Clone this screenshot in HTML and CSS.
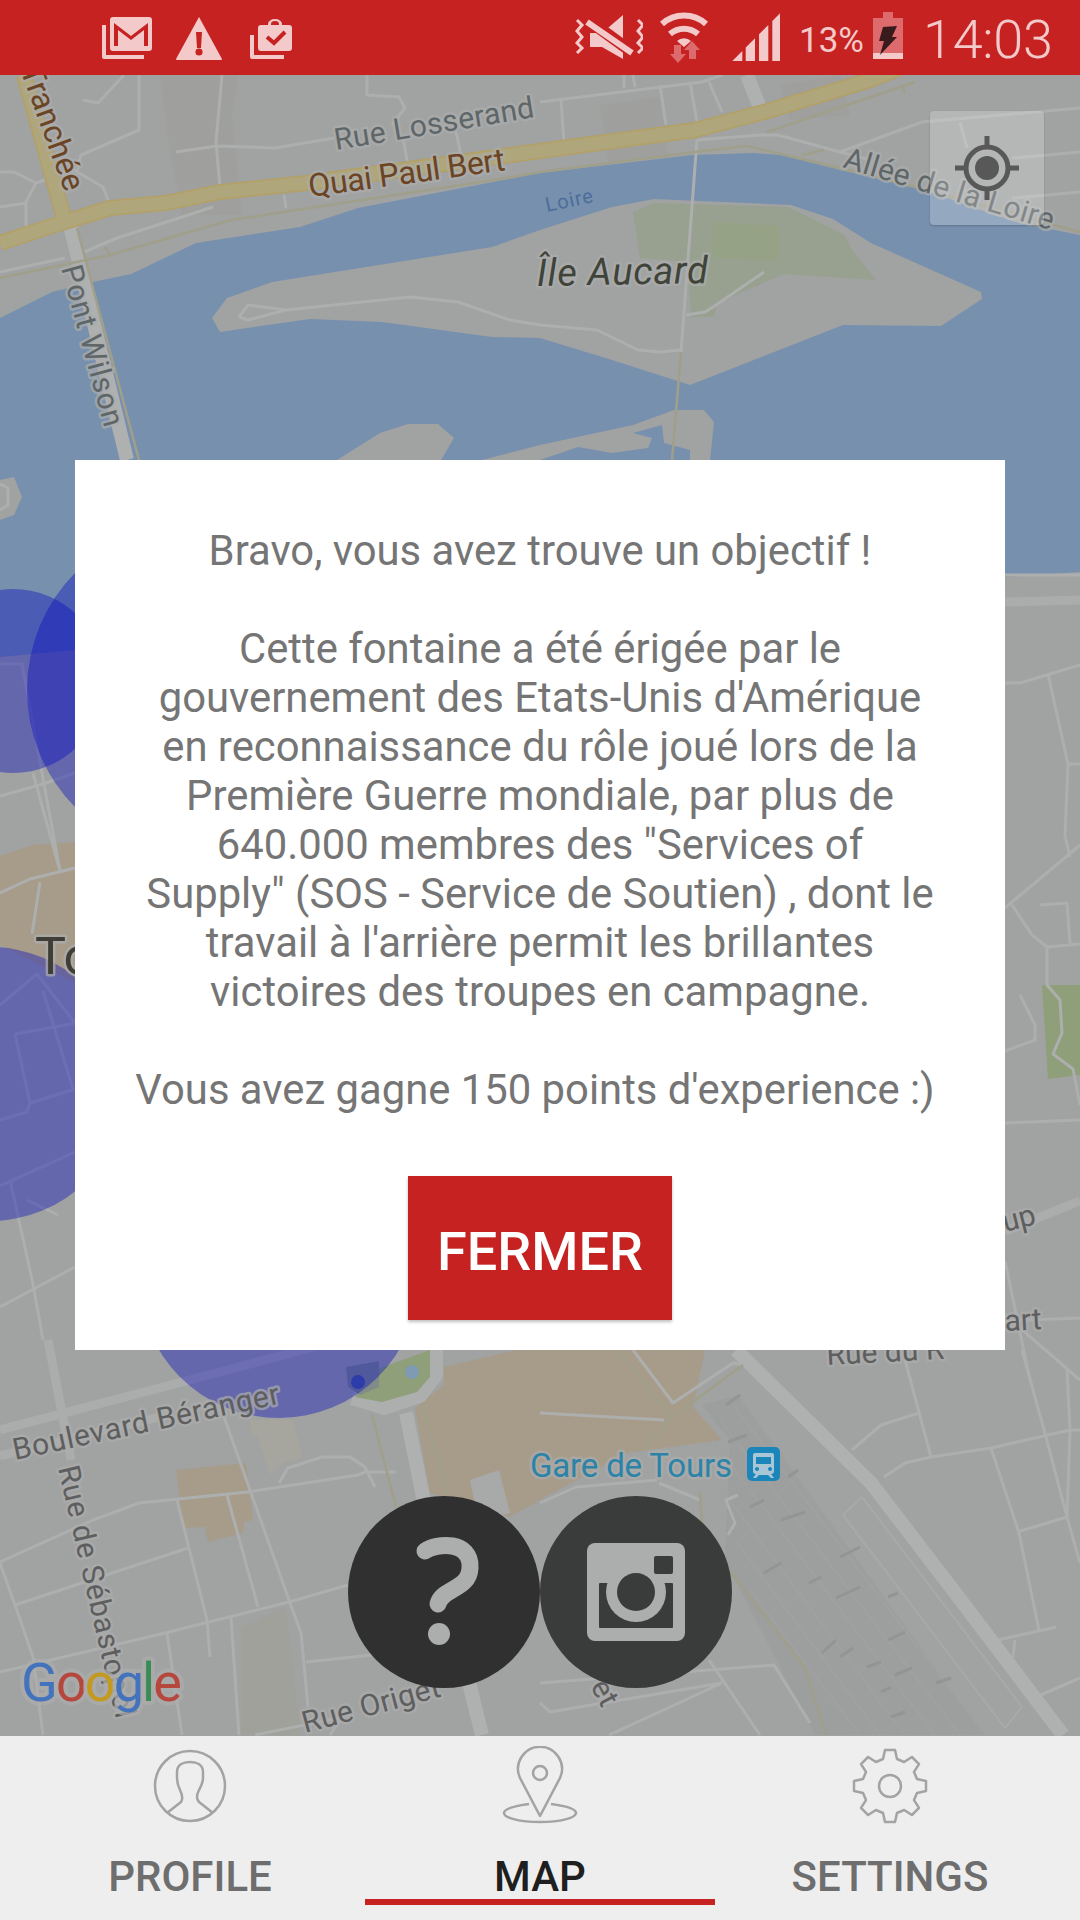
FILE: index.html
```html
<!DOCTYPE html>
<html lang="fr">
<head>
  <meta charset="UTF-8">
  <meta name="viewport" content="width=device-width, initial-scale=1.0">
  <title>Map</title>
  <link rel="stylesheet" href="styles.css">
</head>
<body>
  <div class="statusbar">
    <svg class="st-gmail" width="50" height="45" viewBox="102 16 50 45">
      <path class="pale" d="M113 17h36a3 3 0 0 1 3 3v28a3 3 0 0 1-3 3h-36a3 3 0 0 1-3-3V20a3 3 0 0 1 3-3z"/>
      <path class="cut" d="M114 46V23l17 13 17-13v23h-4V30l-13 10-13-10v16z"/>
      <path class="pale" d="M102 25h4v30h38v4h-40a2 2 0 0 1-2-2z"/>
    </svg>
    <svg class="st-warn" width="46" height="45" viewBox="176 16 46 45">
      <path class="pale" d="M199 17l23 42a1 1 0 0 1-1 1h-44a1 1 0 0 1-1-1z"/>
      <path class="cut" d="M196 32h6l-1 16h-4z"/>
      <circle class="cut" cx="199" cy="52" r="3.6"/>
    </svg>
    <svg class="st-case" width="42" height="45" viewBox="250 16 42 45">
      <path class="pale" d="M261 25h7v-1a7 5 0 0 1 14 0v1h7a3 3 0 0 1 3 3v20a3 3 0 0 1-3 3h-28a3 3 0 0 1-3-3V28a3 3 0 0 1 3-3z"/>
      <path class="cut" d="M271 25v-1a4 3 0 0 1 8 0v1z"/>
      <path class="cut-line" d="M267 37l7 6 11-11"/>
      <path class="pale" d="M250 35h4v20h30v4h-32a2 2 0 0 1-2-2z"/>
    </svg>
    <div class="st-right">
      <svg class="st-mute" width="68" height="46" viewBox="575 14 68 46">
        <path class="pale" d="M590 33h12l21-18v44l-21-12h-12z"/>
        <path class="slash-gap" d="M588 20l44 32"/>
        <path class="slash" d="M587 22l45 31"/>
        <path class="zig" d="M577 20l5 5-5 6 5 6-5 6 5 5-5 5M638 20l5 5-5 6 5 6-5 6 5 5-5 5"/>
      </svg>
      <svg class="st-wifi" width="48" height="54" viewBox="660 9 48 54">
        <path class="wave" d="M662 24a33 33 0 0 1 44 0M670 34a21 21 0 0 1 28 0"/>
        <path class="pale" d="M677 41a10 10 0 0 1 14 0l-7 6z"/>
        <path class="dim" d="M674 45h7v9h5l-8 9-8-9h4zM692 41l8 9h-4v9h-7v-9h-5z"/>
      </svg>
      <svg class="st-signal" width="48" height="48" viewBox="732 13 48 48">
        <path class="pale" d="M732.3 61l10-10v10zM745.7 47.6l9.300-9.300V61h-9.300zM759 34.300l9.300-9.300v36H759zM772.3 21l7.700-7.700V61h-7.700z"/>
      </svg>
      <span class="st-pct">13%</span>
      <svg class="st-batt" width="30" height="48" viewBox="873 12 30 48">
        <path class="dim" d="M883 12h10v6h10v35h-30V18h10z"/>
        <path class="pale" d="M873 53h30v6h-30z"/>
        <path class="bolt" d="M883 27l14-1-5 11h5l-17 18 4-14h-5z"/>
      </svg>
      <span class="st-time">14:03</span>
    </div>
  </div>

  <div class="map">
    <svg class="map-canvas" width="1080" height="1661" viewBox="0 75 1080 1661">
      <rect class="land" x="0" y="75" width="1080" height="1661"/>
      <path class="block" d="M160 75h78l-6 40 10 100-60 0-12-60zM600 105l60-8 8 60-60 5zM780 85l60-10 10 40-60 5z"/>

      <path class="water" d="M0 318L52 292 93 282 131 274 196 243 300 227 358 208 540 173 692 155 753 153 781 155 840 170 919 188 1015 222 1080 235V572L1005 577 75 650 0 657z"/>
      <path class="land" d="M0 480L14 477 22 497 14 515 0 520z"/>
      <path class="road" d="M0 484L8 488 8 505 0 510"/>
      <path class="land" d="M212 318L227 298 272 282 492 247 540 230 612 207 654 199 791 205 833 219 871 243 981 292 982 299 941 326 843 325 690 385 612 360 540 338 492 337 382 322 310 319 220 332z"/>
      <path class="park" d="M633 212L654 203 788 207 845 235 852 250 876 280 784 274 747 290 717 303 714 317 691 317 688 262 640 258z"/>
      <path class="park-dark" d="M714 222L779 226 778 262 712 257z"/>
      <path class="land" d="M337 460L380 433 408 424 438 424 454 438 441 460zM482 460L540 445 633 425 674 410 704 410 714 422 709 470 690 470 690 450 664 443 662 425 633 433 652 438 648 448 612 453 578 447 540 460z"/>

      <path class="tan" d="M0 856L32 845 75 842 90 990 0 945z"/>
      <path class="tan" d="M444 1367L516 1350 705 1350 693 1407 722 1440 626 1453 540 1500 510 1517 430 1493 415 1408 444 1385z"/>
      <path class="pale-block" d="M470 1480L499 1470 510 1513 478 1520z"/>
      <path class="tan" d="M176 1470L246 1463 253 1520 244 1522 243 1533 208 1542 205 1527 183 1528z"/>
      <path class="cream" d="M250 1420L293 1420 303 1457 282 1463 270 1475 258 1438 250 1432z"/>
      <path class="grey-green" d="M241 1627L286 1607 300 1735 241 1735z"/>
      <path class="green" d="M1042 985H1080V1075L1048 1079z"/>
      <path class="yard" d="M702 1405L738 1395 984 1735H815L725 1560 730 1440z"/>
      <path class="track" d="M733 1405L985 1735M720 1420L960 1735M712 1440L935 1735M722 1490L905 1735M735 1540L880 1735M750 1590L860 1735"/>
      <path class="tick" d="M726 1405L740 1395M728 1442L747 1435M781 1520L805 1512M788 1477L798 1470M750 1507L764 1500M840 1557L860 1547M764 1573L781 1563M809 1583L821 1577M836 1598L860 1587M888 1597L898 1593M888 1640L905 1632M822 1653L836 1640M840 1657L853 1648M867 1667L881 1662M895 1675L912 1668M881 1692L891 1687M936 1683L951 1678M891 1717L905 1712"/>

      <!-- small streets -->
      <path class="road" d="M139 75V130L81 155 77 172M83 100L98 103 124 75M0 172H14L36 183 26 202V227M0 207L26 203M36 183L74 170 103 187 110 205M176 152L217 146 275 148 334 138M222 75L216 142 220 187M403 138L408 165M456 132L461 155M367 75L367 95 399 97 405 108 392 125M0 272L65 258M84 252L117 238 213 207M284 195L286 208"/>
      <path class="road" d="M540 102L702 82 722 75M561 100L564 142M660 85L666 125M690 82L697 122M709 82L722 112M624 75V88M633 75L635 87M697 140L760 135 778 135 840 152 922 122 1080 108M840 152L870 160M960 122L967 148M1012 158L1080 152M1012 198L1080 192M764 272L716 305 705 312 686 315M239 317L248 305 286 310 410 297 458 302 510 320 540 325 597 330 638 350 660 352 681 350M239 317L248 320 286 310"/>
      <path class="road" d="M697 140L681 352"/>
      <path class="road" d="M1005 575H1080M1005 683H1020L1080 665M1048 674L1068 764 1065 836 1070 857M1068 764H1080M1005 908L1080 845M1012 905L1032 935 1047 947 1080 944M1040 905L1067 903 1070 944M1047 947L1047 985 1060 1000 1062 1033 1053 1054 1073 1069 1080 1105M1020 995L1035 1025V1040L1005 1051M1005 1123L1080 1120M1005 1261L1030 1380M1005 1321L1080 1318M1005 1315L1080 1380"/>
      <path class="road" d="M0 664H20L22 664 60 871M0 796L43 784 75 773M33 773L60 871M0 893L30 879 75 868M40 882L32 934M0 1005L37 974 75 1023M15 1034L60 1026 75 1023M15 1034L30 1103 75 1089M30 1103L27 1112 0 1120M43 991L73 1089M0 1186L75 1152M10 1180L33 1284 43 1340M0 1307L75 1267M27 1200L58 1215"/>
      <path class="road" d="M0 1562L93 1520 139 1503 248 1492 358 1475 365 1472H396M224 1417L250 1490 289 1600 301 1633 308 1707M177 1500L207 1620 210 1657M227 1495L258 1607M0 1672L165 1633 289 1602 348 1585M231 1617L239 1735M167 1633L182 1735M0 1563L15 1605 33 1657 43 1735M15 1605L188 1548M279 1483L288 1468 322 1457H350L365 1467 375 1487M306 1662L372 1655M255 1735L344 1717M330 1735L340 1720"/>
      <path class="road" d="M905 1360L931 1457M852 1450L881 1425 919 1413M884 1477L905 1463 931 1457 991 1448 1070 1430H1080M991 1448L1019 1533 1039 1630M1017 1532L1067 1517M1022 1350L1046 1437 1067 1517 1080 1563M1067 1370L1070 1430 1067 1517M998 1640L1056 1627M1015 1640L1013 1657M1036 1697L1080 1678M540 1413L664 1420M633 1350L673 1403 733 1363 743 1365M540 1503L576 1487 657 1480M659 1483L700 1500M709 1660L760 1735M540 1683L774 1665 810 1723M540 1703L550 1712 722 1683M609 1735L722 1683M738 1495L726 1500 735 1523 728 1535"/>
      <path class="road-thin" d="M862 1497L1022 1707M843 1515L862 1497M843 1515L1005 1728 1022 1707"/>

      <!-- wide streets -->
      <path class="road-wide" d="M0 1430L220 1372 320 1345M0 1456L172 1414M48 1340L71 1460M1005 602L1080 600M1005 1231L1080 1201"/>
      <path class="road-big" d="M406 1413L423 1497 482 1735M736 1350L871 1483 953 1590 1063 1735M70 225L127 460"/>
      <path class="road-big" d="M747 75L760 108"/>

      <!-- rail lines -->
      <path class="rail" d="M0 278L110 255 231 220 513 177 540 172 695 152 747 146 836 167 919 188 1080 232M767 132L915 82M902 85L905 93M802 155L824 150M77 228L139 460M110 255L105 247M681 352L672 460"/>
      <path class="rail" d="M372 1415L396 1507M424 1407L448 1497M619 1350L671 1418 643 1450M743 1365L671 1418M700 1492L702 1523M729 1570L805 1668 826 1735"/>

      <!-- main road, yellow -->
      <path class="yellow-edge" d="M0 243L55 225 81 217 110 208 165 203 220 192 306 183 540 151 643 137 695 130 764 112 870 80 905 66M24 75L65 222"/>
      <path class="yellow" d="M0 243L55 225 81 217 110 208 165 203 220 192 306 183 540 151 643 137 695 130 764 112 870 80 905 66M24 75L65 222"/>

      <path class="ring" d="M352 1398L385 1408 420 1396 436 1375 436 1350"/>
      <path class="park-green" d="M430 1350V1377L417 1392 382 1402 355 1397 375 1370z"/>
      <circle class="pond" cx="412" cy="1372" r="7"/>
      <path class="block-blue" d="M346 1367L379 1361V1387L360 1395 348 1387z"/>
      <circle class="pond-dark" cx="358" cy="1382" r="7"/>

      <!-- zones -->
      <circle class="zone" cx="13" cy="681" r="92"/>
      <circle class="zone" cx="194" cy="690" r="167"/>
      <circle class="zone" cx="-10" cy="1084" r="137"/>
      <circle class="zone" cx="279" cy="1278" r="140"/>

      <!-- labels -->
      <text class="lbl lbl-grey" transform="translate(336 150) rotate(-9.400)" textLength="202">Rue Losserand</text>
      <text class="lbl lbl-brown" transform="translate(310 197) rotate(-7.800)" textLength="198">Quai Paul Bert</text>
      <text class="lbl lbl-brown lbl-end" transform="translate(65 193) rotate(70)">Tranchée</text>
      <text class="lbl lbl-grey" transform="translate(61 268) rotate(74.800)" textLength="166">Pont Wilson</text>
      <text class="lbl lbl-water" transform="translate(547 212) rotate(-12)" textLength="48">Loire</text>
      <text class="lbl lbl-island" transform="translate(537 286) rotate(-1)" textLength="171">Île Aucard</text>
      <text class="lbl lbl-grey" transform="translate(842 167) rotate(16.800)" textLength="218">Allée de la Loire</text>
      <text class="lbl lbl-town" x="35" y="974">To</text>
      <text class="lbl lbl-dark" transform="translate(15 1460) rotate(-12)" textLength="272">Boulevard Béranger</text>
      <text class="lbl lbl-dark" transform="translate(58 1468) rotate(77)" textLength="258">Rue de Sébastopol</text>
      <text class="lbl lbl-dark" transform="translate(305 1733) rotate(-15)" textLength="142">Rue Origet</text>
      <text class="lbl lbl-dark" transform="translate(590 1686) rotate(62)">et</text>
      <text class="lbl lbl-dark" transform="translate(827 1365) rotate(-3)">Rue du R</text>
      <text class="lbl lbl-dark" x="1005" y="1232" transform="rotate(-14 1005 1232)">up</text>
      <text class="lbl lbl-dark" x="1005" y="1331" transform="rotate(-3 1005 1331)">art</text>
      <text class="lbl lbl-station" x="530" y="1477" textLength="202">Gare de Tours</text>
      <rect class="train-bg" x="747" y="1447" width="33" height="34" rx="5"/>
      <path class="train" d="M755 1453h17a2 2 0 0 1 2 2v16a3 3 0 0 1-3 3l3 4h-3l-3-3h-9l-3 3h-3l3-4a3 3 0 0 1-3-3v-16a2 2 0 0 1 2-2zM756 1457v7h15v-7zM757 1467a2 2 0 1 0 0.100 0zM770 1467a2 2 0 1 0 0.100 0z"/>
      <text class="lbl lbl-google" x="21" y="1701" textLength="161"><tspan class="g-blue">G</tspan><tspan class="g-red">o</tspan><tspan class="g-yellow">o</tspan><tspan class="g-blue">g</tspan><tspan class="g-green">l</tspan><tspan class="g-red">e</tspan></text>
    </svg>

    <div class="locate">
      <svg width="64" height="64" viewBox="0 0 64 64">
        <circle class="loc-ring" cx="32" cy="32" r="21"/>
        <circle class="loc-dot" cx="32" cy="32" r="12"/>
        <path class="loc-ticks" d="M32 0v12M32 52v12M0 32h12M52 32h12"/>
      </svg>
    </div>

    <div class="dialog">
      <p>Bravo, vous avez trouve un objectif !</p>
      <p>Cette fontaine a été érigée par le<br>gouvernement des Etats-Unis d'Amérique<br>en reconnaissance du rôle joué lors de la<br>Première Guerre mondiale, par plus de<br>640.000 membres des "Services of<br>Supply" (SOS - Service de Soutien) , dont le<br>travail à l'arrière permit les brillantes<br>victoires des troupes en campagne.</p>
      <p class="last-line">Vous avez gagne 150 points d'experience :)</p>
      <button class="close-btn">FERMER</button>
    </div>

    <div class="actions">
      <div class="fab fab-help">
        <svg width="192" height="192" viewBox="0 0 192 192">
          <path class="q-line" d="M77 55C88 47 124 44 122 72 121 94 94 92 90 108"/>
          <circle class="q-dot" cx="91" cy="138" r="11"/>
        </svg>
      </div>
      <div class="fab fab-insta">
        <svg width="192" height="192" viewBox="0 0 192 192">
          <rect class="ig-light" x="47" y="47" width="98" height="98" rx="8"/>
          <rect class="ig-dark" x="59" y="87" width="74" height="45" rx="1"/>
          <circle class="ig-light" cx="96" cy="96" r="30"/>
          <circle class="ig-dark" cx="96" cy="96" r="19"/>
          <rect class="ig-dark" x="114" y="60" width="19" height="18" rx="2"/>
        </svg>
      </div>
    </div>
  </div>

  <div class="tabs">
    <div class="tab">
      <svg width="80" height="80" viewBox="-40 -40 80 80">
        <circle class="ico" cx="0" cy="0" r="35"/>
        <path class="ico" d="M-23 27L-9 16C-7 13-8 8-10 4-12 0-13-3-13-8V-14C-13-21-7-24 0-24 7-24 13-21 13-14V-8C13-3 11 0 9 4 7 8 6 13 9 16L23 27"/>
      </svg>
      <span>PROFILE</span>
    </div>
    <div class="tab active">
      <svg width="80" height="80" viewBox="-40 -40 80 80">
        <path class="ico" d="M0 30L-20 -8A22 22 0 1 1 20 -8z"/>
        <circle class="ico" cx="0" cy="-13" r="7"/>
        <path class="ico" d="M-11 18C-26 20-36 23-36 27-36 32-20 36 0 36 20 36 36 32 36 27 36 23 26 20 11 18"/>
      </svg>
      <span>MAP</span>
    </div>
    <div class="tab">
      <svg width="80" height="80" viewBox="-40 -40 80 80">
        <path class="ico" d="M-7-27L-5-36H5L7-27 14.100-24 21.900-29 29-21.900 24-14.100 27-7 36-5V5L27 7 24 14.100 29 21.900 21.900 29 14.100 24 7 27 5 36H-5L-7 27-14.100 24-21.900 29-29 21.900-24 14.100-27 7-36 5V-5L-27-7-24-14.100-29-21.900-21.900-29-14.100-24z"/>
        <circle class="ico" cx="0" cy="0" r="11"/>
      </svg>
      <span>SETTINGS</span>
    </div>
  </div>
</body>
</html>
```

FILE: styles.css
```css
html,body{
  margin: 0;
  padding: 0;
}
body{
  width: 1080px;
  height: 1920px;
  display: flex;
  flex-direction: column;
  overflow: hidden;
  font-family: Roboto, "Liberation Sans", sans-serif;
  background-color: #eeeeee;
}

/* status bar */
.statusbar{
  height: 75px;
  flex: none;
  display: flex;
  align-items: flex-start;
  padding: 16px 28px 0 102px;
  box-sizing: border-box;
  background-color: #c62222;
  color: #f3c9ca;
}
.st-warn{
  margin-left: 24px;
}
.st-case{
  margin-left: 28px;
}
.st-right{
  margin-left: auto;
  display: flex;
  align-items: flex-start;
  margin-top: -16px;
}
.st-mute{
  margin-top: 14px;
}
.st-wifi{
  margin: 9px 0 0 17px;
}
.st-signal{
  margin: 13px 0 0 24px;
}
.st-pct{
  margin: 21px 0 0 19px;
  font-size: 35px;
  line-height: 40px;
  width: 64px;
  white-space: nowrap;
}
.st-batt{
  margin: 12px 0 0 10px;
}
.st-time{
  margin: 8px 0 0 20px;
  font-size: 54px;
  font-weight: 300;
  line-height: 64px;
  width: 129px;
  letter-spacing: -0.3px;
  white-space: nowrap;
}
.pale{
  fill: #f3c9ca;
}
.dim{
  fill: #dd6a6d;
}
.cut{
  fill: #c62222;
}
.cut-line{
  fill: none;
  stroke: #c62222;
  stroke-width: 4;
}
.bolt{
  fill: #3a1b1b;
}
.slash-gap{
  stroke: #c62222;
  stroke-width: 12;
}
.slash{
  stroke: #f3c9ca;
  stroke-width: 6;
}
.zig{
  fill: none;
  stroke: #f3c9ca;
  stroke-width: 3;
}
.wave{
  fill: none;
  stroke: #f3c9ca;
  stroke-width: 6;
}

/* map */
.map{
  position: relative;
  flex: 1;
  overflow: hidden;
}
.map-canvas{
  display: block;
}
.land{
  fill: #a1a2a2;
}
.block{
  fill: #9fa09e;
}
.water{
  fill: #7790ae;
}
.park{
  fill: #98a190;
}
.park-dark{
  fill: #95a286;
}
.tan{
  fill: #a79c8a;
}
.pale-block{
  fill: #a8a9a9;
}
.cream{
  fill: #a6a69e;
}
.grey-green{
  fill: #9fa19a;
}
.green,.park-green{
  fill: #8e9f79;
}
.yard{
  fill: #9d9e9e;
}
.track{
  fill: none;
  stroke: #a0a1a1;
  stroke-width: 2;
}
.tick{
  fill: none;
  stroke: #939494;
  stroke-width: 3;
}
.road,.road-thin,.road-wide,.road-big,.rail,.yellow,.yellow-edge,.ring{
  fill: none;
  stroke-linejoin: round;
}
.road{
  stroke: #adaeae;
  stroke-width: 3;
}
.road-thin{
  stroke: #a8a9a9;
  stroke-width: 2;
}
.road-wide{
  stroke: #abacac;
  stroke-width: 9;
}
.road-big{
  stroke: #afb0b0;
  stroke-width: 14;
}
.rail{
  stroke: #a09f8a;
  stroke-width: 2.500;
}
.yellow-edge{
  stroke: #b3a064;
  stroke-width: 16;
}
.yellow{
  stroke: #afa67c;
  stroke-width: 13;
}
.ring{
  stroke: #adaeae;
  stroke-width: 14;
}
.pond{
  fill: #7f9bb4;
}
.pond-dark{
  fill: #0d2fb4;
  fill-opacity: .5;
}
.block-blue{
  fill: #7f8c88;
}
.zone{
  fill: #0004be;
  fill-opacity: .37;
}
.lbl{
  font-family: Roboto, "Liberation Sans", sans-serif;
  font-size: 30px;
  paint-order: stroke;
  stroke: #acadad;
  stroke-opacity: .7;
  stroke-width: 5px;
  stroke-linejoin: round;
}
.lbl-grey{
  fill: #5e6668;
}
.lbl-dark{
  fill: #5e5e5e;
}
.lbl-brown{
  fill: #6b4423;
  font-size: 32px;
}
.lbl-end{
  text-anchor: end;
}
.lbl-water{
  fill: #4e6c99;
  font-size: 20px;
  stroke: none;
}
.lbl-island{
  fill: #3f4338;
  font-size: 38px;
  font-style: italic;
}
.lbl-town{
  fill: #3e3e36;
  font-size: 52px;
}
.lbl-station{
  fill: #2c83a8;
  font-size: 33px;
}
.lbl-google{
  font-size: 54px;
  font-weight: 400;
  stroke-width: 8px;
}
.g-blue{
  fill: #4473bd;
}
.g-red{
  fill: #b5473c;
}
.g-yellow{
  fill: #c39a1f;
}
.g-green{
  fill: #3a8c55;
}
.train-bg{
  fill: #1c86ba;
}
.train{
  fill: #a9c6d6;
  fill-rule: evenodd;
}

/* locate button */
.locate{
  position: absolute;
  left: 930px;
  top: 36px;
  width: 114px;
  height: 114px;
  display: flex;
  align-items: center;
  justify-content: center;
  border-radius: 4px;
  background-color: rgba(255,255,255,.22);
  box-shadow: 0 1px 2px rgba(0,0,0,.2);
}
.loc-ring{
  fill: none;
  stroke: #585858;
  stroke-width: 5;
}
.loc-dot{
  fill: #585858;
}
.loc-ticks{
  fill: none;
  stroke: #585858;
  stroke-width: 5;
}

/* dialog */
.dialog{
  position: absolute;
  left: 75px;
  top: 385px;
  width: 930px;
  height: 890px;
  box-sizing: border-box;
  padding-top: 66px;
  display: flex;
  flex-direction: column;
  align-items: center;
  background-color: #ffffff;
  color: #757575;
  font-size: 41.800px;
  line-height: 49px;
  text-align: center;
}
.dialog p{
  margin: 0 0 49px;
  white-space: nowrap;
}
.dialog .last-line{
  padding-right: 10px;
}
.close-btn{
  margin-top: 13px;
  width: 264px;
  height: 144px;
  padding: 6px 0 0;
  border: none;
  background-color: #c62222;
  color: #ffffff;
  font-family: Roboto, "Liberation Sans", sans-serif;
  font-size: 54px;
  font-weight: 500;
  box-shadow: 0 2px 3px rgba(0,0,0,.25);
}

/* round buttons */
.actions{
  position: absolute;
  left: 348px;
  top: 1421px;
  display: flex;
}
.fab{
  width: 192px;
  height: 192px;
  border-radius: 50%;
}
.fab svg{
  display: block;
}
.fab-help{
  background-color: #303030;
}
.fab-insta{
  background-color: #3a3b3b;
}
.q-line{
  fill: none;
  stroke: #acadad;
  stroke-width: 17;
  stroke-linecap: round;
}
.q-dot{
  fill: #acadad;
}
.ig-light{
  fill: #acadad;
}
.ig-dark{
  fill: #3a3b3b;
}

/* tabs */
.tabs{
  height: 184px;
  flex: none;
  display: flex;
  justify-content: center;
  background-color: #eeeeee;
}
.tab{
  width: 350px;
  height: 169px;
  box-sizing: border-box;
  padding-top: 10px;
  border-bottom: 6px solid transparent;
  display: flex;
  flex-direction: column;
  align-items: center;
  color: #6e6e6e;
  font-size: 42px;
  font-weight: 500;
  line-height: 45px;
}
.tab svg{
  display: block;
  flex: none;
  margin-bottom: 28px;
}
.tab.active{
  color: #1f1f1f;
  border-bottom-color: #c62222;
}
.ico{
  fill: none;
  stroke: #a3a3a3;
  stroke-width: 2.500;
  stroke-linejoin: round;
}
```
